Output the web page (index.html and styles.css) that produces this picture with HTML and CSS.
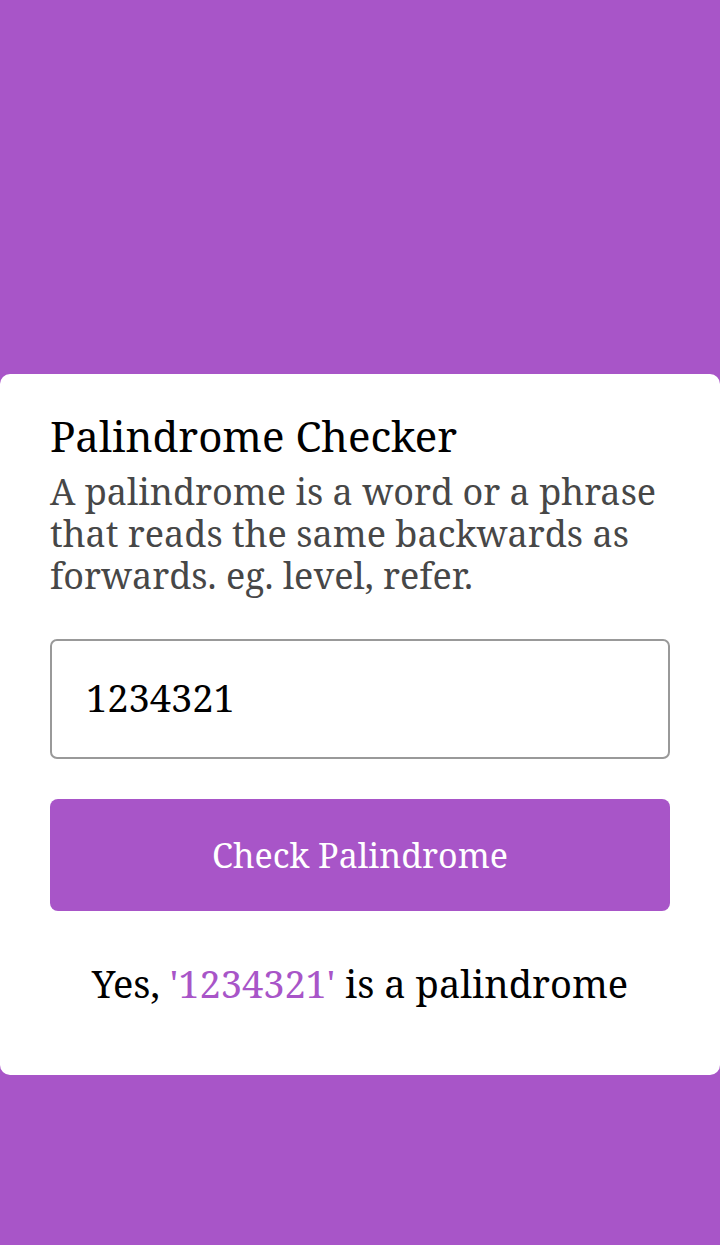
FILE: index.html
```html
<!DOCTYPE html>
<html>
<head>
<meta charset="utf-8">
<link rel="stylesheet" href="styles.css">
</head>
<body>
<main class="page">
  <section class="card">
    <h1 class="title">Palindrome Checker</h1>
    <p class="desc">A palindrome is a word or a phrase that reads the same backwards as forwards. eg. level, refer.</p>
    <input class="field" type="text" value="1234321">
    <button class="btn">Check Palindrome</button>
    <p class="result">Yes, <span class="hl">'1234321'</span> is a palindrome</p>
  </section>
</main>
</body>
</html>
```
FILE: styles.css
```css
* { box-sizing: border-box; }
html, body { margin: 0; padding: 0; }
body {
  background: #a855c8;
  font-family: "Noto Serif", "DejaVu Serif", serif;
  height: 1245px;
}
.page {
  display: flex;
  flex-direction: column;
  padding-top: 374px;
  height: 1245px;
}
.card {
  background: #fff;
  border-radius: 10px;
  padding: 34px 50px 0;
  display: flex;
  flex-direction: column;
  height: 701px;
}
.title {
  margin: 0;
  font-weight: 400;
  font-size: 42px;
  line-height: 56px;
  color: #000;
}
.desc {
  margin: 7px 0 0;
  font-size: 36px;
  line-height: 42px;
  color: #474747;
}
.field {
  margin-top: 42px;
  height: 120px;
  border: 2px solid #999;
  border-radius: 7px;
  padding: 0 34px 5px;
  font-family: inherit;
  font-size: 38px;
  color: #000;
  outline: none;
}
.btn {
  margin-top: 40px;
  height: 112px;
  border: none;
  border-radius: 8px;
  background: #a855c8;
  color: #fff;
  font-family: inherit;
  font-size: 34px;
}
.result {
  margin: 46px 0 0;
  text-align: center;
  font-size: 38px;
  color: #000;
}
.hl { color: #a855c8; }
```
